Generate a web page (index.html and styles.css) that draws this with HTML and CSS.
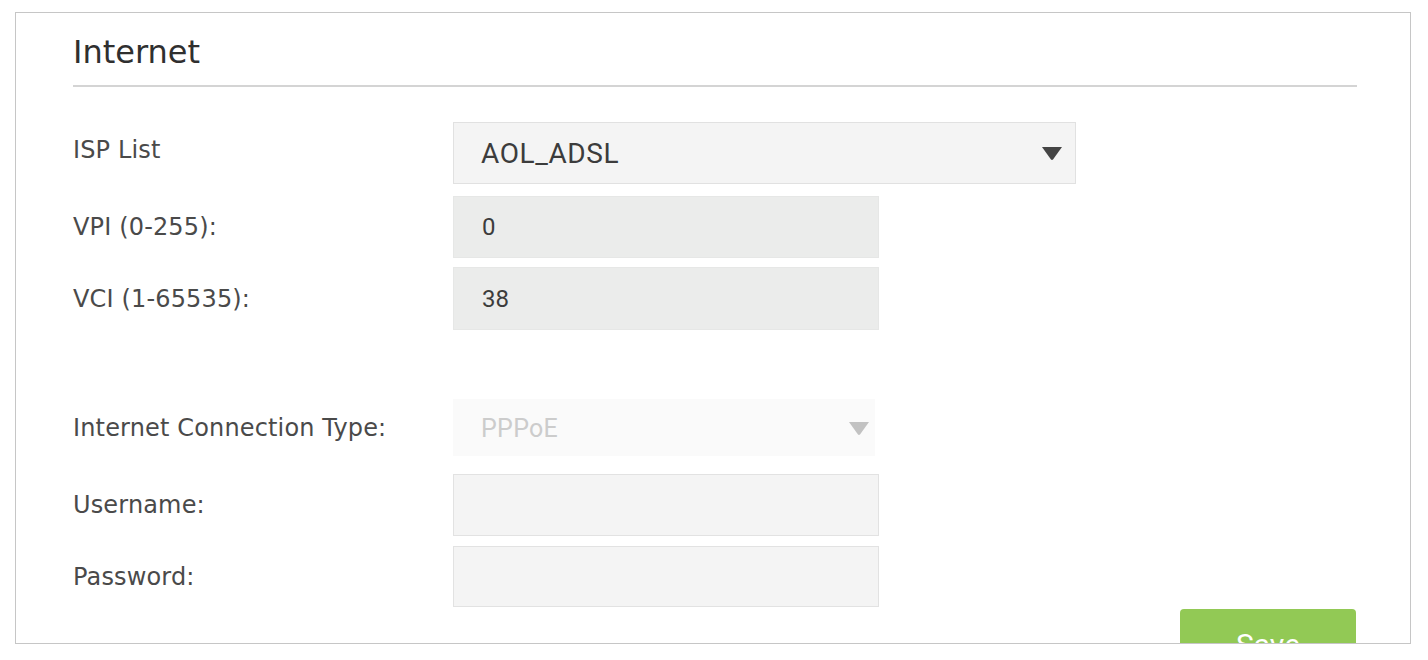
FILE: index.html
```html
<!DOCTYPE html>
<html lang="en">
<head>
<meta charset="utf-8">
<title>Internet</title>
<link rel="stylesheet" href="styles.css">
</head>
<body>
<div class="panel">
  <h2 class="title">Internet</h2>
  <div class="form">
    <div class="row row-isp">
      <label class="label label-isp">ISP List</label>
      <div class="select select-isp">
        <span class="select-text">AOL_ADSL</span>
        <svg class="arrow" width="20" height="13" viewBox="0 0 20 13"><path d="M0 0 H20 L11.2 12.2 Q10 13.6 8.8 12.2 Z" fill="#444"/></svg>
      </div>
    </div>
    <div class="row row-vpi">
      <label class="label">VPI (0-255):</label>
      <div class="field field-ro"><span class="field-text">0</span></div>
    </div>
    <div class="row row-vci">
      <label class="label">VCI (1-65535):</label>
      <div class="field field-ro field-tall"><span class="field-text">38</span></div>
    </div>
    <div class="row row-type">
      <label class="label">Internet Connection Type:</label>
      <div class="select select-disabled">
        <span class="select-text">PPPoE</span>
        <svg class="arrow" width="20" height="13" viewBox="0 0 20 13"><path d="M0 0 H20 L11.2 12.2 Q10 13.6 8.8 12.2 Z" fill="#c2c2c2"/></svg>
      </div>
    </div>
    <div class="row row-user">
      <label class="label">Username:</label>
      <div class="field"></div>
    </div>
    <div class="row row-pass">
      <label class="label">Password:</label>
      <div class="field field-short"></div>
    </div>
    <div class="actions">
      <button class="btn-save" type="button">Save</button>
    </div>
  </div>
</div>
</body>
</html>
```
FILE: styles.css
```css
html, body {
  margin: 0;
  padding: 0;
  background: #ffffff;
}

.panel {
  box-sizing: border-box;
  margin: 12px 0 0 15px;
  width: 1396px;
  height: 632px;
  border: 1px solid #c6c6c6;
  padding: 19px 53px 0 57px;
  overflow: hidden;
  background: #ffffff;
}

.title {
  margin: 0;
  padding: 0 0 13px 0;
  font-family: "DejaVu Sans", Verdana, sans-serif;
  font-weight: normal;
  font-size: 32px;
  line-height: 40px;
  color: #2f2f2f;
  border-bottom: 2px solid #d4d4d4;
}

.form {
  display: flex;
  flex-direction: column;
}

.row {
  display: flex;
  align-items: center;
}

.row-isp { margin-top: 35px; }
.row-vpi { margin-top: 12px; }
.row-vci { margin-top: 9px; }
.row-type { margin-top: 69px; }
.row-user { margin-top: 18px; }
.row-pass { margin-top: 10px; }

.label {
  width: 380px;
  flex: none;
  font-family: "DejaVu Sans", Verdana, sans-serif;
  font-size: 24px;
  line-height: 30px;
  letter-spacing: 0.15px;
  color: #4a4a4a;
}

.label-isp {
  padding-bottom: 7px;
}

.select {
  box-sizing: border-box;
  display: flex;
  align-items: center;
  justify-content: space-between;
  height: 62px;
  padding: 0 13px 0 27px;
}

.select-isp {
  width: 623px;
  background: #f4f4f4;
  border: 1px solid #e1e1e1;
}

.select-disabled {
  width: 422px;
  height: 57px;
  background: #fafafa;
  border: none;
  padding: 2px 6px 0 28px;
}

.select-text {
  font-family: Roboto, "Liberation Sans", sans-serif;
  font-size: 28px;
  letter-spacing: 0.6px;
  color: #3c3c3c;
}

.select-disabled .select-text {
  font-size: 25px;
  letter-spacing: 0.3px;
  color: #cccccc;
}

.arrow {
  display: block;
  flex: none;
}

.select-isp .arrow {
  margin-top: 1px;
}

.field {
  box-sizing: border-box;
  width: 426px;
  height: 62px;
  background: #f4f4f4;
  border: 1px solid #e2e2e2;
  display: flex;
  align-items: center;
  padding-left: 28px;
}

.field-ro {
  background: #ebeceb;
  border-color: #e6e7e6;
}

.field-tall {
  height: 63px;
}

.field-short {
  height: 61px;
}

.field-text {
  font-family: Roboto, "Liberation Sans", sans-serif;
  font-size: 24px;
  color: #3c3c3c;
}

.actions {
  display: flex;
  justify-content: flex-end;
  margin-top: 2px;
  padding-right: 1px;
}

.btn-save {
  width: 176px;
  height: 56px;
  border: none;
  border-radius: 4px;
  background: #92c955;
  color: #ffffff;
  font-family: Roboto, "Liberation Sans", sans-serif;
  font-size: 30px;
  line-height: 40px;
  padding: 16px 0 0 0;
  text-align: center;
  vertical-align: top;
}
```
